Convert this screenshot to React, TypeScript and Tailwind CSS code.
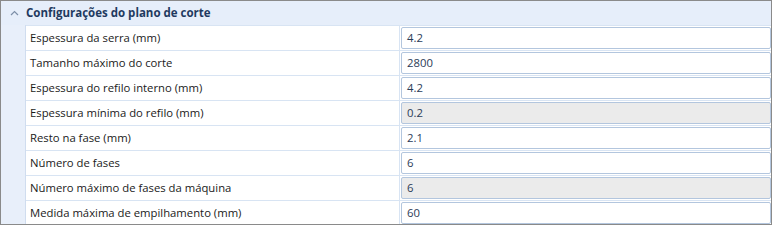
import React from "react";

interface Row {
  label: string;
  value: string;
  readOnly?: boolean;
}

const rows: Row[] = [
  { label: "Espessura da serra (mm)", value: "4.2" },
  { label: "Tamanho máximo do corte", value: "2800" },
  { label: "Espessura do refilo interno (mm)", value: "4.2" },
  { label: "Espessura mínima do refilo (mm)", value: "0.2", readOnly: true },
  { label: "Resto na fase (mm)", value: "2.1" },
  { label: "Número de fases", value: "6" },
  { label: "Número máximo de fases da máquina", value: "6", readOnly: true },
  { label: "Medida máxima de empilhamento (mm)", value: "60" },
];

export default function App() {
  return (
    <div
      className="w-[772px] h-[225px] overflow-hidden border border-[#8a8a8a] bg-[#e8effa] text-[11.3px]"
      style={{ fontFamily: '"Segoe UI", "Open Sans", "Noto Sans", sans-serif' }}
    >
      {/* Header */}
      <div className="flex h-[24px] items-center bg-[#e6eefa]">
        <div className="flex w-[25px] items-center justify-center pl-[2px]">
          <svg width="9" height="6" viewBox="0 0 9 6" fill="none">
            <path d="M1 5 L4.5 1.5 L8 5" stroke="#7d8fa8" strokeWidth="1.2" />
          </svg>
        </div>
        <span className="font-bold text-[#1f3a60] text-[11.5px]">Configurações do plano de corte</span>
      </div>

      {/* Property grid */}
      <div className="flex">
        <div className="w-[24px] shrink-0 bg-[#e8effa]" />
        <div className="flex-1 border-l border-[#d0ddef] bg-white">
          {rows.map((row) => (
            <div key={row.label} className="flex h-[25px] border-t border-[#d8e4f3]">
              <div className="flex w-[374px] shrink-0 items-center border-r border-[#d8e4f3] pl-[4px] text-[#1a1a1a]">
                {row.label}
              </div>
              <div className="flex-1 pl-[1px] pt-[1px]">
                <div
                  className={`flex h-[22px] items-center rounded-[2px] border border-[#b3c6de] pl-[5px] text-[#2a3b57] ${
                    row.readOnly ? "bg-[#ebebeb]" : "bg-white"
                  }`}
                >
                  {row.value}
                </div>
              </div>
            </div>
          ))}
        </div>
      </div>
    </div>
  );
}
